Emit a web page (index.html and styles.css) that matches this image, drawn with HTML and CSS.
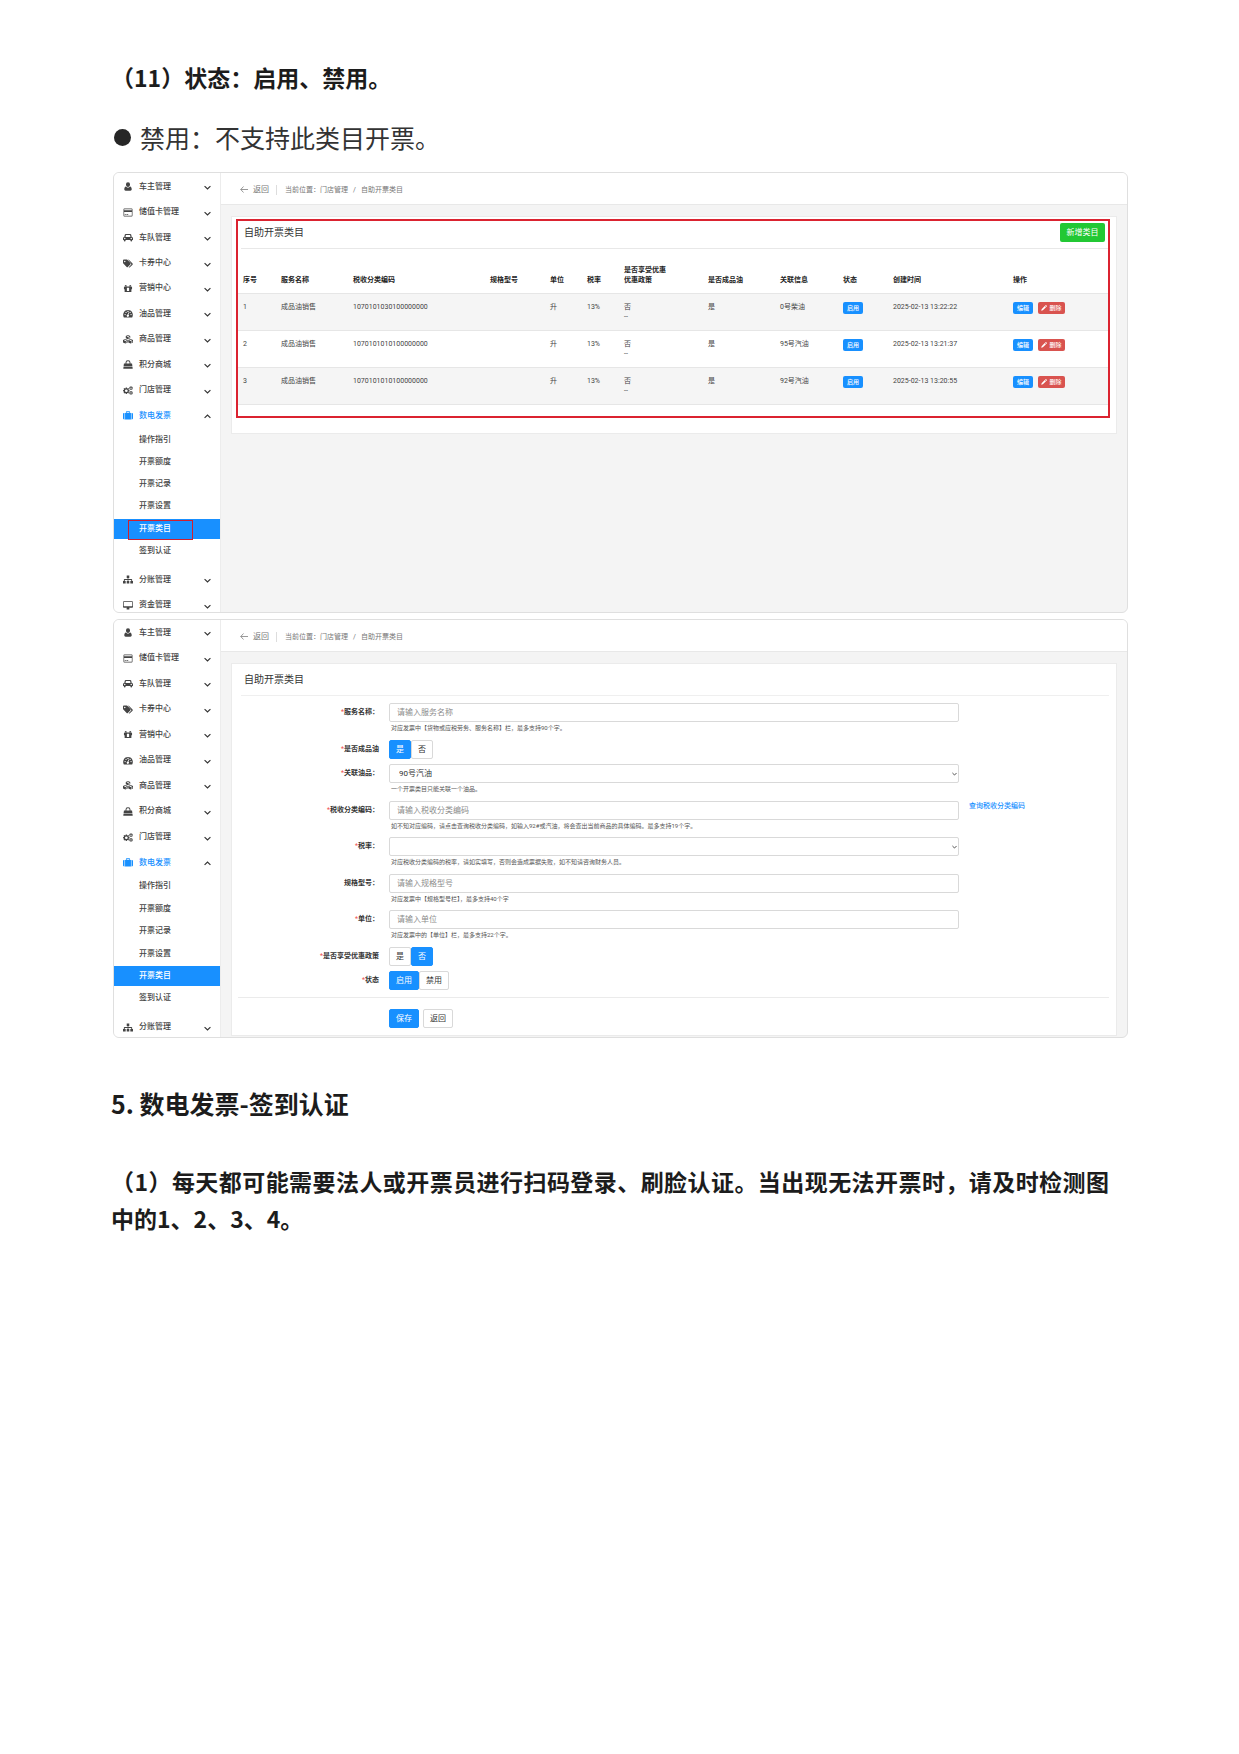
FILE: index.html
```html
<!DOCTYPE html>
<html lang="zh-CN">
<head>
<meta charset="utf-8">
<meta name="viewport" content="width=device-width, initial-scale=1">
<title>数电发票</title>
<link rel="stylesheet" href="styles.css">
</head>
<body>
<svg class="sprite" aria-hidden="true">
  <symbol id="i-user" viewBox="0 0 16 16"><path d="M8 0.5a3.6 3.6 0 0 1 3.6 3.8c0 2.300-1.600 4.400-3.600 4.400S4.400 6.600 4.400 4.300A3.600 3.600 0 0 1 8 .5zM4.300 8.200c1 1.300 2.300 2 3.700 2s2.700-.7 3.700-2c2 .4 2.900 2.200 2.900 4.700 0 1.600-.9 2.600-2.300 2.600H3.700c-1.400 0-2.300-1-2.300-2.600 0-2.500.9-4.300 2.900-4.700z"/></symbol>
  <symbol id="i-card" viewBox="0 0 16 16"><path fill-rule="evenodd" d="M1.500 1h13A1.500 1.500 0 0 1 16 2.500v11a1.500 1.500 0 0 1-1.500 1.500h-13A1.500 1.500 0 0 1 0 13.500v-11A1.500 1.500 0 0 1 1.500 1zM1.200 2.700v1.500h13.600V2.700l-.5-.5H1.700zM1.200 7v6.300l.5.500h12.600l.5-.5V7zM2.200 10.800h2v1.400h-2zM5.200 10.800h3.200v1.400H5.200z"/></symbol>
  <symbol id="i-car" viewBox="0 0 18 16"><path fill-rule="evenodd" d="M5 1.500h8c.9 0 1.500.5 1.700 1.300L15.700 7c1.300.1 2.300 1 2.300 2.300v3.400h-1.500v.8c0 1-.7 1.700-1.600 1.700s-1.600-.7-1.600-1.700v-.8H4.700v.8c0 1-.7 1.700-1.600 1.700s-1.600-.7-1.600-1.700v-.8H0V9.300C0 8 1 7.100 2.300 7l1-4.200C3.500 2 4.100 1.500 5 1.500zM5.300 3.500 4.500 7h9l-.8-3.500zM3.200 8.600a1.300 1.300 0 1 0 0 2.600 1.300 1.300 0 0 0 0-2.600zm11.600 0a1.300 1.300 0 1 0 0 2.600 1.300 1.300 0 0 0 0-2.600z"/></symbol>
  <symbol id="i-tags" viewBox="0 0 18 16"><path fill-rule="evenodd" d="M0 2.500C0 1.700.7 1 1.500 1h4.700c.7 0 1.500.3 2 .8l5.300 5.300c.6.6.6 1.500 0 2.100l-4.800 4.900c-.6.600-1.500.6-2.100 0L1 8.500C.4 8 0 7.200 0 6.500zM3.200 3a1.300 1.300 0 1 0 0 2.600 1.300 1.300 0 0 0 0-2.600z"/><path d="M8.700 1c.8 0 1.700.4 2.200.9l6.300 6.200c.6.6.6 1.500 0 2.100l-4.900 4.600c-.9.700-1.600.3-2-.2l4.200-4.200c.8-.8.800-1.800 0-2.600z"/></symbol>
  <symbol id="i-gift" viewBox="0 0 16 16"><path fill-rule="evenodd" d="M7.500 5 5.300 2.500C4 1.300 2.200 2 2.200 3.400S3.400 5 4 5H.8v4.200H2V14h12V9.200h1.200V5H12c.6 0 1.800-.2 1.800-1.600S12 1.300 10.700 2.500L8.500 5zM4.600 3.200 6 4.600H4c-1 0-.6-2 .6-1.400zm6.800 0c1.200-.6 1.600 1.400.6 1.400h-2zM6 6.500h4v6H6z"/></symbol>
  <symbol id="i-gauge" viewBox="0 0 18 16"><path fill-rule="evenodd" d="M9 1.500a9 9 0 0 1 7.500 13.500h-15A9 9 0 0 1 9 1.500zM3.800 8.700a1.200 1.200 0 1 0 0 2.400 1.200 1.200 0 0 0 0-2.400zm1.700-4a1.200 1.200 0 1 0 0 2.400 1.200 1.200 0 0 0 0-2.400zM9 3a1.200 1.200 0 1 0 0 2.400A1.200 1.200 0 0 0 9 3zm3.800 1.700a1.200 1.200 0 1 0 0 2.400 1.200 1.200 0 0 0 0-2.400zm1.700 4a1.200 1.200 0 1 0 0 2.400 1.200 1.200 0 0 0 0-2.400zM9.600 6.300 8.500 10a2 2 0 1 0 1.300.3l1.100-3.600z"/></symbol>
  <symbol id="i-cubes" viewBox="0 0 18 16"><path fill-rule="evenodd" d="M9 0l4 1.700v4.200L9 7.700 5 5.900V1.700zM6.400 2.300 9 3.400l2.600-1.100L9 1.200zM9.700 4.500v1.800l2.200-1V3.600zM4.300 7.200l4.200 1.700v4.400L4.300 15.300 0 13.300V8.900zM1.500 9.500l2.800 1.200 2.700-1.200-2.700-1.100zM5 12v1.800l2.300-1.100v-1.700zM13.700 7.200 18 8.900v4.400l-4.300 2-4.200-2V8.900zM11 9.500l2.700 1.200 2.800-1.200-2.800-1.100zm3.400 2.500v1.800l2.400-1.100v-1.700z"/></symbol>
  <symbol id="i-bag" viewBox="0 0 18 16"><path fill-rule="evenodd" d="M4.500 6V4.800A4.300 4.300 0 0 1 9 .500a4.300 4.300 0 0 1 4.500 4.300V6h2.800l.7 5.500H1L1.700 6zM6.200 6h5.600V4.800A2.700 2.700 0 0 0 9 2.200a2.700 2.700 0 0 0-2.800 2.600zM.9 12.500h16.200l.4 3H.5z"/></symbol>
  <symbol id="i-cogs" viewBox="0 0 18 16"><path fill-rule="evenodd" d="M5 2.500h2l.3 1.500 1 .4 1.200-.8 1.300 1.400-.8 1.200.4 1 1.500.3v2l-1.500.3-.4 1 .8 1.200-1.300 1.400-1.300-.8-1 .4-.3 1.500H5l-.3-1.500-1-.4-1.300.8L1 12l.8-1.200-.4-1L0 9.500v-2l1.400-.3.4-1L1 5l1.400-1.400 1.300.8 1-.4zM6 6a2.400 2.400 0 1 0 0 4.900A2.400 2.400 0 0 0 6 6z"/><path fill-rule="evenodd" d="M13.500.5h1.800l.3 1.200 1.100-.3.900 1.500-.8.900.8.900-.9 1.500-1.100-.3-.3 1.200h-1.800l-.3-1.200-1.100.3-.9-1.500.8-.9-.8-.9.900-1.500 1.100.3zm.9 2.200a1.200 1.200 0 1 0 0 2.400 1.200 1.200 0 0 0 0-2.400zM13.500 9h1.800l.3 1.200 1.100-.3.900 1.500-.8.900.8.900-.9 1.500-1.100-.3-.3 1.200h-1.800l-.3-1.200-1.100.3-.9-1.500.8-.9-.8-.9.900-1.500 1.100.3zm.9 2.200a1.200 1.200 0 1 0 0 2.400 1.200 1.200 0 0 0 0-2.400z"/></symbol>
  <symbol id="i-case" viewBox="0 0 18 16"><path d="M0 5.500C0 4.300.8 3.500 2 3.500h.7V15H2c-1.200 0-2-.8-2-2zM15.300 3.500h.7c1.200 0 2 .8 2 2V13c0 1.200-.8 2-2 2h-.7zM3.700 15V3.500h1.500V2c0-.8.6-1.500 1.400-1.500h4.800c.8 0 1.400.7 1.400 1.500v1.500h1.500V15zM6.600 2v1.500h4.800V2z"/></symbol>
  <symbol id="i-tree" viewBox="0 0 18 16"><path d="M6.700 1h4.600v4.500H9.700v1.800h5.600c.7 0 1.200.5 1.200 1.200v2H18V15h-4.800v-4.500h1.600V9H9.700v1.500h1.600V15H6.700v-4.500h1.600V9H3.200v1.500h1.600V15H0v-4.500h1.500v-2c0-.7.5-1.200 1.200-1.200h5.600V5.500H6.700z"/></symbol>
  <symbol id="i-desktop" viewBox="0 0 18 16"><path fill-rule="evenodd" d="M1.500.5h15c.8 0 1.500.7 1.500 1.500v8.700c0 .8-.7 1.500-1.500 1.500H11c0 .9.700 1.300.7 2s-.3.800-.7.800H7c-.4 0-.7-.2-.7-.8s.7-1.100.7-2H1.500c-.8 0-1.500-.7-1.500-1.500V2C0 1.200.7.500 1.500.5zM1.300 1.800v7.400h15.400V1.800z"/></symbol>
  <symbol id="i-chev" viewBox="0 0 12 8"><path d="M1 1.500 6 6.500l5-5" fill="none" stroke="currentColor" stroke-width="2"/></symbol>
  <symbol id="i-back" viewBox="0 0 16 14"><path d="M7 1 1.500 7 7 13M1.500 7H16" fill="none" stroke="currentColor" stroke-width="1.500"/></symbol>
  <symbol id="i-pencil" viewBox="0 0 16 16"><path d="M.5 15.500 1.700 11 10 2.700l3.300 3.300L5 14.300zM11 1.700 12.200.5c.5-.5 1-.5 1.500 0l1.800 1.800c.5.500.5 1 0 1.500L14.300 5z"/></symbol>
</svg>

<main class="doc">
  <h3 class="step">（11）状态：启用、禁用。</h3>
  <ul class="notes"><li>禁用：不支持此类目开票。</li></ul>

  <section class="screen screen-list">
    <nav class="side">
      <button class="item"><svg class="ico"><use href="#i-user"/></svg><span>车主管理</span><svg class="chev"><use href="#i-chev"/></svg></button>
      <button class="item"><svg class="ico"><use href="#i-card"/></svg><span>储值卡管理</span><svg class="chev"><use href="#i-chev"/></svg></button>
      <button class="item"><svg class="ico"><use href="#i-car"/></svg><span>车队管理</span><svg class="chev"><use href="#i-chev"/></svg></button>
      <button class="item"><svg class="ico"><use href="#i-tags"/></svg><span>卡券中心</span><svg class="chev"><use href="#i-chev"/></svg></button>
      <button class="item"><svg class="ico"><use href="#i-gift"/></svg><span>营销中心</span><svg class="chev"><use href="#i-chev"/></svg></button>
      <button class="item"><svg class="ico"><use href="#i-gauge"/></svg><span>油品管理</span><svg class="chev"><use href="#i-chev"/></svg></button>
      <button class="item"><svg class="ico"><use href="#i-cubes"/></svg><span>商品管理</span><svg class="chev"><use href="#i-chev"/></svg></button>
      <button class="item"><svg class="ico"><use href="#i-bag"/></svg><span>积分商城</span><svg class="chev"><use href="#i-chev"/></svg></button>
      <button class="item"><svg class="ico"><use href="#i-cogs"/></svg><span>门店管理</span><svg class="chev"><use href="#i-chev"/></svg></button>
      <button class="item open"><svg class="ico"><use href="#i-case"/></svg><span>数电发票</span><svg class="chev"><use href="#i-chev"/></svg></button>
      <ul class="sub">
        <li><a href="#">操作指引</a></li>
        <li><a href="#">开票额度</a></li>
        <li><a href="#">开票记录</a></li>
        <li><a href="#">开票设置</a></li>
        <li><a href="#" class="current marked">开票类目</a></li>
        <li><a href="#">签到认证</a></li>
      </ul>
      <button class="item"><svg class="ico"><use href="#i-tree"/></svg><span>分账管理</span><svg class="chev"><use href="#i-chev"/></svg></button>
      <button class="item"><svg class="ico"><use href="#i-desktop"/></svg><span>资金管理</span><svg class="chev"><use href="#i-chev"/></svg></button>
    </nav>
    <div class="work">
      <header class="bar">
        <a class="back" href="#"><svg><use href="#i-back"/></svg>返回</a>
        <div class="crumbs"><span>当前位置：</span><a href="#">门店管理</a><i>/</i><span>自助开票类目</span></div>
      </header>
      <div class="panel">
        <div class="panel-head"><h4>自助开票类目</h4><button class="add">新增类目</button></div>
        <table class="grid">
          <colgroup><col class="w-no"><col class="w-name"><col class="w-code"><col class="w-spec"><col class="w-unit"><col class="w-unit"><col class="w-policy"><col class="w-name"><col class="w-info"><col class="w-state"><col class="w-time"><col></colgroup>
          <thead><tr><th>序号</th><th>服务名称</th><th>税收分类编码</th><th>规格型号</th><th>单位</th><th>税率</th><th>是否享受优惠<br>优惠政策</th><th>是否成品油</th><th>关联信息</th><th>状态</th><th>创建时间</th><th>操作</th></tr></thead>
          <tbody>
            <tr><td>1</td><td>成品油销售</td><td>1070101030100000000</td><td></td><td>升</td><td>13%</td><td>否<br>--</td><td>是</td><td>0号柴油</td><td><span class="tag">启用</span></td><td>2025-02-13 13:22:22</td><td><div class="acts"><button class="tag">编辑</button><button class="tag del"><svg><use href="#i-pencil"/></svg>删除</button></div></td></tr>
            <tr><td>2</td><td>成品油销售</td><td>1070101010100000000</td><td></td><td>升</td><td>13%</td><td>否<br>--</td><td>是</td><td>95号汽油</td><td><span class="tag">启用</span></td><td>2025-02-13 13:21:37</td><td><div class="acts"><button class="tag">编辑</button><button class="tag del"><svg><use href="#i-pencil"/></svg>删除</button></div></td></tr>
            <tr><td>3</td><td>成品油销售</td><td>1070101010100000000</td><td></td><td>升</td><td>13%</td><td>否<br>--</td><td>是</td><td>92号汽油</td><td><span class="tag">启用</span></td><td>2025-02-13 13:20:55</td><td><div class="acts"><button class="tag">编辑</button><button class="tag del"><svg><use href="#i-pencil"/></svg>删除</button></div></td></tr>
          </tbody>
        </table>
        <div class="frame"></div>
      </div>
    </div>
  </section>

  <section class="screen screen-form">
    <nav class="side">
      <button class="item"><svg class="ico"><use href="#i-user"/></svg><span>车主管理</span><svg class="chev"><use href="#i-chev"/></svg></button>
      <button class="item"><svg class="ico"><use href="#i-card"/></svg><span>储值卡管理</span><svg class="chev"><use href="#i-chev"/></svg></button>
      <button class="item"><svg class="ico"><use href="#i-car"/></svg><span>车队管理</span><svg class="chev"><use href="#i-chev"/></svg></button>
      <button class="item"><svg class="ico"><use href="#i-tags"/></svg><span>卡券中心</span><svg class="chev"><use href="#i-chev"/></svg></button>
      <button class="item"><svg class="ico"><use href="#i-gift"/></svg><span>营销中心</span><svg class="chev"><use href="#i-chev"/></svg></button>
      <button class="item"><svg class="ico"><use href="#i-gauge"/></svg><span>油品管理</span><svg class="chev"><use href="#i-chev"/></svg></button>
      <button class="item"><svg class="ico"><use href="#i-cubes"/></svg><span>商品管理</span><svg class="chev"><use href="#i-chev"/></svg></button>
      <button class="item"><svg class="ico"><use href="#i-bag"/></svg><span>积分商城</span><svg class="chev"><use href="#i-chev"/></svg></button>
      <button class="item"><svg class="ico"><use href="#i-cogs"/></svg><span>门店管理</span><svg class="chev"><use href="#i-chev"/></svg></button>
      <button class="item open"><svg class="ico"><use href="#i-case"/></svg><span>数电发票</span><svg class="chev"><use href="#i-chev"/></svg></button>
      <ul class="sub">
        <li><a href="#">操作指引</a></li>
        <li><a href="#">开票额度</a></li>
        <li><a href="#">开票记录</a></li>
        <li><a href="#">开票设置</a></li>
        <li><a href="#" class="current">开票类目</a></li>
        <li><a href="#">签到认证</a></li>
      </ul>
      <button class="item"><svg class="ico"><use href="#i-tree"/></svg><span>分账管理</span><svg class="chev"><use href="#i-chev"/></svg></button>
    </nav>
    <div class="work">
      <header class="bar">
        <a class="back" href="#"><svg><use href="#i-back"/></svg>返回</a>
        <div class="crumbs"><span>当前位置：</span><a href="#">门店管理</a><i>/</i><span>自助开票类目</span></div>
      </header>
      <div class="panel">
        <div class="panel-head"><h4>自助开票类目</h4></div>
        <form class="form">
          <div class="rows">
            <div class="row"><label class="name" for="f-name"><b>*</b>服务名称：</label><div class="field"><input class="box" id="f-name" type="text" placeholder="请输入服务名称"><p>对应发票中【货物或应税劳务、服务名称】栏，最多支持90个字。</p></div></div>
            <div class="row"><span class="name" id="l-oil"><b>*</b>是否成品油</span><div class="toggle" role="radiogroup" aria-labelledby="l-oil"><label><input type="radio" name="oil" checked><span>是</span></label><label><input type="radio" name="oil"><span>否</span></label></div></div>
            <div class="row"><label class="name" for="f-oil"><b>*</b>关联油品：</label><div class="field"><div class="pick"><select class="box" id="f-oil"><option>90号汽油</option></select><svg><use href="#i-chev"/></svg></div><p>一个开票类目只能关联一个油品。</p></div></div>
            <div class="row"><label class="name" for="f-code"><b>*</b>税收分类编码：</label><div class="field"><input class="box" id="f-code" type="text" placeholder="请输入税收分类编码"><p>如不知对应编码，请点击查询税收分类编码，如输入92#或汽油，将会查出当前商品的具体编码。最多支持19个字。</p></div><a class="lookup" href="#">查询税收分类编码</a></div>
            <div class="row"><label class="name" for="f-rate"><b>*</b>税率：</label><div class="field"><div class="pick"><select class="box" id="f-rate"><option></option></select><svg><use href="#i-chev"/></svg></div><p>对应税收分类编码的税率，请如实填写，否则会造成票据失败，如不知请咨询财务人员。</p></div></div>
            <div class="row"><label class="name" for="f-spec">规格型号：</label><div class="field"><input class="box" id="f-spec" type="text" placeholder="请输入规格型号"><p>对应发票中【规格型号栏】，最多支持40个字</p></div></div>
            <div class="row"><label class="name" for="f-unit"><b>*</b>单位：</label><div class="field"><input class="box" id="f-unit" type="text" placeholder="请输入单位"><p>对应发票中的【单位】栏，最多支持22个字。</p></div></div>
            <div class="row"><span class="name" id="l-policy"><b>*</b>是否享受优惠政策</span><div class="toggle" role="radiogroup" aria-labelledby="l-policy"><label><input type="radio" name="policy"><span>是</span></label><label><input type="radio" name="policy" checked><span>否</span></label></div></div>
            <div class="row"><span class="name" id="l-state"><b>*</b>状态</span><div class="toggle" role="radiogroup" aria-labelledby="l-state"><label><input type="radio" name="state" checked><span>启用</span></label><label><input type="radio" name="state"><span>禁用</span></label></div></div>
          </div>
          <div class="submit"><button type="button" class="btn primary">保存</button><button type="button" class="btn">返回</button></div>
        </form>
      </div>
    </div>
  </section>

  <h2 class="title">5. 数电发票-签到认证</h2>
  <h3 class="step para">（1）每天都可能需要法人或开票员进行扫码登录、刷脸认证。当出现无法开票时，请及时检测图中的1、2、3、4。</h3>
</main>
</body>
</html>
```
FILE: styles.css
```css
* { box-sizing: border-box; }
body {
  margin: 0;
  background: #fff;
  color: #333;
  font-family: Roboto, "Noto Sans CJK SC", sans-serif;
}
h2, h3, h4, p, ul { margin: 0; padding: 0; }
ul { list-style: none; }
a { color: inherit; text-decoration: none; }
button, input, select { font: inherit; color: inherit; margin: 0; }
button { border: 0; padding: 0; background: none; }
svg { fill: currentColor; flex: none; }
.sprite { position: absolute; width: 0; height: 0; }

/* document text */
.doc { padding: 59px 111px 60px; font-family: "Noto Sans CJK SC", sans-serif; }
.step { font-size: 23px; line-height: 37px; font-weight: 700; color: #1c1c1c; }
.notes { margin: 23px 0 16px; font-size: 25px; line-height: 37px; }
.notes li { display: flex; align-items: center; gap: 9px; padding-left: 3px; }
.notes li::before { content: ""; width: 17px; height: 17px; border-radius: 50%; background: #262626; }
.title { margin-top: 47px; font-size: 25px; line-height: 37px; font-weight: 700; color: #1c1c1c; }
.para { margin-top: 41px; padding-right: 19px; text-align: justify; }

/* framed application screens */
.screen {
  display: flex;
  margin-left: 2px;
  border: 1px solid #dfdfdf;
  border-radius: 6px;
  background: #f4f4f4;
  overflow: hidden;
  font-family: Roboto, "Noto Sans CJK SC", sans-serif;
  font-size: 7px;
  line-height: 10px;
}
.screen-list { min-height: 441px; }
.screen-form { min-height: 419px; margin-top: 6px; }

.side {
  flex: 0 0 107px;
  display: flex;
  flex-direction: column;
  margin-bottom: -6px;
  padding-top: 1px;
  border-right: 1px solid #ececec;
  background: #fff;
  font-size: 8px;
  font-weight: 500;
  color: #444;
}
.screen-form .side { margin-bottom: -3px; padding-top: 0; }
.item { flex: 1 0 25px; display: flex; align-items: center; gap: 6px; padding: 0 9px; text-align: left; }
.item span { flex: 1; }
.ico { width: 10px; height: 9px; color: #444; }
.chev { width: 7px; height: 5px; margin-top: 2px; color: #333; }
.open span, .open .ico { color: #1890ff; }
.open .chev { transform: rotate(180deg); }
.sub { flex: 6 0 136px; display: flex; flex-direction: column; padding-bottom: 5px; }
.sub li { flex: 1; display: flex; align-items: center; }
.sub a { position: relative; flex: 1; padding-left: 25px; line-height: 20px; }
.sub .current { background: #1890ff; color: #fff; }
.marked::after {
  content: "";
  position: absolute;
  left: 14px;
  top: 1px;
  width: 63px;
  height: 18px;
  border: 1px solid #d0202f;
}

.work { flex: 1; min-width: 0; display: flex; flex-direction: column; }
.bar {
  display: flex;
  align-items: center;
  height: 32px;
  padding: 2px 19px 0;
  border-bottom: 1px solid #e8e8e8;
  background: #fff;
  color: #777;
}
.back { display: flex; align-items: center; gap: 5px; padding-right: 7px; border-right: 1px solid #ddd; font-size: 8px; }
.back svg { width: 8px; height: 7px; }
.crumbs { display: flex; padding-left: 8px; }
.crumbs i { padding: 0 5px; font-style: normal; }

.panel { position: relative; margin: 11px 10px 0; padding: 0 7px 28px 6px; border: 1px solid #ebebeb; background: #fff; }
.panel-head {
  display: flex;
  align-items: center;
  justify-content: space-between;
  height: 32px;
  margin-left: 3px;
  padding: 0 4px 0 3px;
  border-bottom: 1px solid #e8e8e8;
}
.panel h4 { font-size: 10px; font-weight: 400; }
.add { width: 45px; height: 19px; border-radius: 2px; background: #22c834; color: #fff; font-size: 8px; }
.frame { position: absolute; left: 4px; right: 6px; top: 2px; bottom: 15px; border: 2px solid #db2330; pointer-events: none; }

/* category table */
.grid { width: 100%; margin-top: 8px; border-collapse: collapse; table-layout: fixed; }
.grid th, .grid td { padding: 8px 0 8px 5px; border-bottom: 1px solid #e6e6e6; text-align: left; vertical-align: top; white-space: nowrap; }
.grid th { vertical-align: bottom; font-weight: 700; color: #222; }
.grid td { color: #444; }
.grid tbody tr:nth-child(odd) { background: #f5f5f5; }
.w-no { width: 38px; }
.w-name { width: 72px; }
.w-code { width: 137px; }
.w-spec { width: 60px; }
.w-unit { width: 37px; }
.w-policy { width: 84px; }
.w-info { width: 63px; }
.w-state { width: 50px; }
.w-time { width: 120px; }
.acts { display: flex; gap: 5px; }
.tag {
  display: flex;
  align-items: center;
  justify-content: center;
  gap: 2px;
  width: 20px;
  height: 12px;
  border-radius: 2px;
  background: #1890ff;
  color: #fff;
  font-size: 6px;
  font-weight: 500;
}
.del { width: 27px; background: #d9534f; }
.tag svg { width: 6px; height: 6px; }

/* category form */
.screen-form .panel { flex: 1; display: flex; flex-direction: column; margin-bottom: 1px; padding-bottom: 7px; }
.screen-form .panel-head { border-color: #efefef; }
.form { flex: 1; display: flex; flex-direction: column; }
.rows { flex: 1; display: flex; flex-direction: column; justify-content: space-between; padding: 7px 0; border-bottom: 1px solid #ebebeb; }
.row { display: grid; grid-template-columns: 141px minmax(0, 570px) auto; justify-content: start; column-gap: 10px; }
.name { line-height: 19px; text-align: right; font-weight: 700; color: #333; }
.name b { color: #f05050; font-weight: 400; }
.box {
  display: block;
  width: 100%;
  height: 19px;
  padding: 0 7px;
  border: 1px solid #d9d9d9;
  border-radius: 2px;
  background: #fff;
  font-size: 8px;
  outline: 0;
  appearance: none;
}
.box::placeholder { color: #8c8c8c; }
.pick { position: relative; }
.pick .box { padding-left: 9px; }
.pick svg { position: absolute; right: 2px; top: 8px; width: 5px; height: 4px; }
.field p { padding-left: 2px; font-size: 6px; line-height: 12px; color: #555; }
.lookup { align-self: start; color: #1890ff; font-weight: 500; }
.toggle { display: flex; }
.toggle input { position: absolute; opacity: 0; width: 1px; height: 1px; }
.toggle span, .btn {
  display: block;
  height: 19px;
  padding: 0 6px;
  border: 1px solid #d9d9d9;
  border-radius: 2px;
  background: #fff;
  font-size: 8px;
  line-height: 17px;
}
.toggle input:checked + span, .primary { border-color: #1890ff; background: #1890ff; color: #fff; }
.submit { display: flex; gap: 4px; padding: 11px 0 0 151px; }
```
